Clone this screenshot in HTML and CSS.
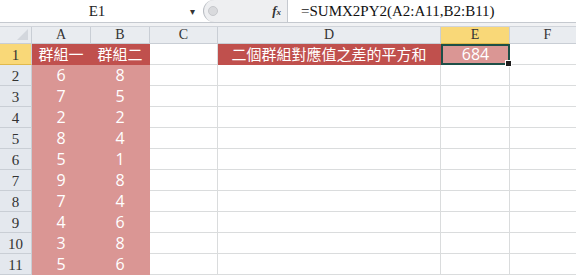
FILE: index.html
```html
<!DOCTYPE html>
<html lang="zh-Hant">
<head>
  <meta charset="UTF-8" />
  <title>SUMX2PY2</title>
  <link rel="stylesheet" href="styles.css">
</head>
<body>
  <div class="formula-bar">
    <div class="name-box">E1</div>
    <div class="name-arrow">&#9662;</div>
    <div class="fx-pill">
      <span class="knob"></span>
      <span class="fx"><i>f</i><small>x</small></span>
    </div>
    <div class="formula">=SUMX2PY2(A2:A11,B2:B11)</div>
  </div>
  <div class="gap"></div>

  <div class="sheet">
    <div class="corner"><span class="tri"></span></div>
    <div class="col-h">A</div>
    <div class="col-h">B</div>
    <div class="col-h">C</div>
    <div class="col-h">D</div>
    <div class="col-h sel">E</div>
    <div class="col-h">F</div>

    <div class="row-h sel">1</div>
    <div class="cell head">群組一</div>
    <div class="cell head">群組二</div>
    <div class="cell"></div>
    <div class="cell head">二個群組對應值之差的平方和</div>
    <div class="cell active">684</div>
    <div class="cell"></div>

    <div class="row-h">2</div><div class="cell val">6</div><div class="cell val">8</div><div class="cell"></div><div class="cell"></div><div class="cell"></div><div class="cell"></div>
    <div class="row-h">3</div><div class="cell val">7</div><div class="cell val">5</div><div class="cell"></div><div class="cell"></div><div class="cell"></div><div class="cell"></div>
    <div class="row-h">4</div><div class="cell val">2</div><div class="cell val">2</div><div class="cell"></div><div class="cell"></div><div class="cell"></div><div class="cell"></div>
    <div class="row-h">5</div><div class="cell val">8</div><div class="cell val">4</div><div class="cell"></div><div class="cell"></div><div class="cell"></div><div class="cell"></div>
    <div class="row-h">6</div><div class="cell val">5</div><div class="cell val">1</div><div class="cell"></div><div class="cell"></div><div class="cell"></div><div class="cell"></div>
    <div class="row-h">7</div><div class="cell val">9</div><div class="cell val">8</div><div class="cell"></div><div class="cell"></div><div class="cell"></div><div class="cell"></div>
    <div class="row-h">8</div><div class="cell val">7</div><div class="cell val">4</div><div class="cell"></div><div class="cell"></div><div class="cell"></div><div class="cell"></div>
    <div class="row-h">9</div><div class="cell val">4</div><div class="cell val">6</div><div class="cell"></div><div class="cell"></div><div class="cell"></div><div class="cell"></div>
    <div class="row-h">10</div><div class="cell val">3</div><div class="cell val">8</div><div class="cell"></div><div class="cell"></div><div class="cell"></div><div class="cell"></div>
    <div class="row-h">11</div><div class="cell val">5</div><div class="cell val">6</div><div class="cell"></div><div class="cell"></div><div class="cell"></div><div class="cell"></div>
  </div>
</body>
</html>
```

FILE: styles.css
```css
html, body {
  margin: 0;
  padding: 0;
  overflow: hidden;
  background: #fff;
  font-family: "Liberation Serif", "Noto Sans CJK TC", serif;
}

.formula-bar {
  display: flex;
  align-items: center;
  height: 22px;
  background: #fff;
  border-bottom: 1px solid #c5c9cf;
}
.name-box {
  width: 190px;
  text-align: center;
  font-size: 15px;
  color: #222;
  padding-left: 4px;
  box-sizing: border-box;
}
.name-arrow {
  width: 13px;
  font-size: 10px;
  color: #333;
  text-align: left;
}
.fx-pill {
  position: relative;
  display: flex;
  align-items: center;
  width: 84px;
  height: 22px;
  background: #eeeff1;
  border-radius: 11px 0 0 11px;
  border-left: 1px solid #b8bcc2;
  box-sizing: border-box;
}
.knob {
  width: 8px;
  height: 8px;
  margin-left: 4px;
  border-radius: 50%;
  background: #d9dadd;
  border: 1px solid #c6c8cc;
}
.fx {
  margin-left: auto;
  margin-right: 6px;
  font-size: 13px;
  font-weight: bold;
  color: #333;
}
.fx small {
  font-size: 9px;
  font-style: italic;
}
.formula {
  flex: 1;
  height: 22px;
  line-height: 22px;
  border-left: 1px solid #c5c9cf;
  padding-left: 13px;
  font-size: 15px;
  color: #111;
}
.gap {
  height: 3px;
  background: #f1f2f4;
  border-bottom: 1px solid #d0d4da;
}

.sheet {
  display: grid;
  grid-template-columns: 32px 59px 59px 68px 223px 69px 76px;
  grid-template-rows: 17px repeat(11, 21px);
}
.corner, .col-h, .row-h {
  background: #e9ecf0;
  border-right: 1px solid #c9ced5;
  border-bottom: 1px solid #c9ced5;
  box-sizing: border-box;
  color: #333;
}
.corner {
  position: relative;
}
.tri {
  position: absolute;
  right: 3px;
  bottom: 3px;
  width: 0;
  height: 0;
  border-left: 11px solid transparent;
  border-bottom: 11px solid #d3d7dd;
}
.col-h {
  font-size: 14px;
  line-height: 16px;
  text-align: center;
}
.row-h {
  font-size: 15px;
  line-height: 22px;
  text-align: center;
  background: #e4e8ee;
}
.col-h.sel, .row-h.sel {
  background: #f9d878;
  border-bottom-color: #e0b94c;
}
.cell {
  border-right: 1px solid #dadcdd;
  border-bottom: 1px solid #dadcdd;
  box-sizing: border-box;
  font-family: "Open Sans", "Noto Sans CJK TC", sans-serif;
  color: #fff;
  text-align: center;
  font-size: 16px;
  line-height: 20px;
}
.cell.head {
  background: #c0504d;
  border-color: #c0504d;
  font-family: "Noto Sans CJK TC", sans-serif;
  font-size: 15px;
}
.cell.val {
  background: #da9694;
  border-color: #da9694;
}
.cell.active {
  position: relative;
  background: #da9694;
  border: 2px solid #1d4f47;
  line-height: 17px;
}
.cell.active::after {
  content: "";
  position: absolute;
  right: -4px;
  bottom: -4px;
  width: 5px;
  height: 5px;
  background: #1d1d1d;
  border: 1px solid #fff;
}
```
